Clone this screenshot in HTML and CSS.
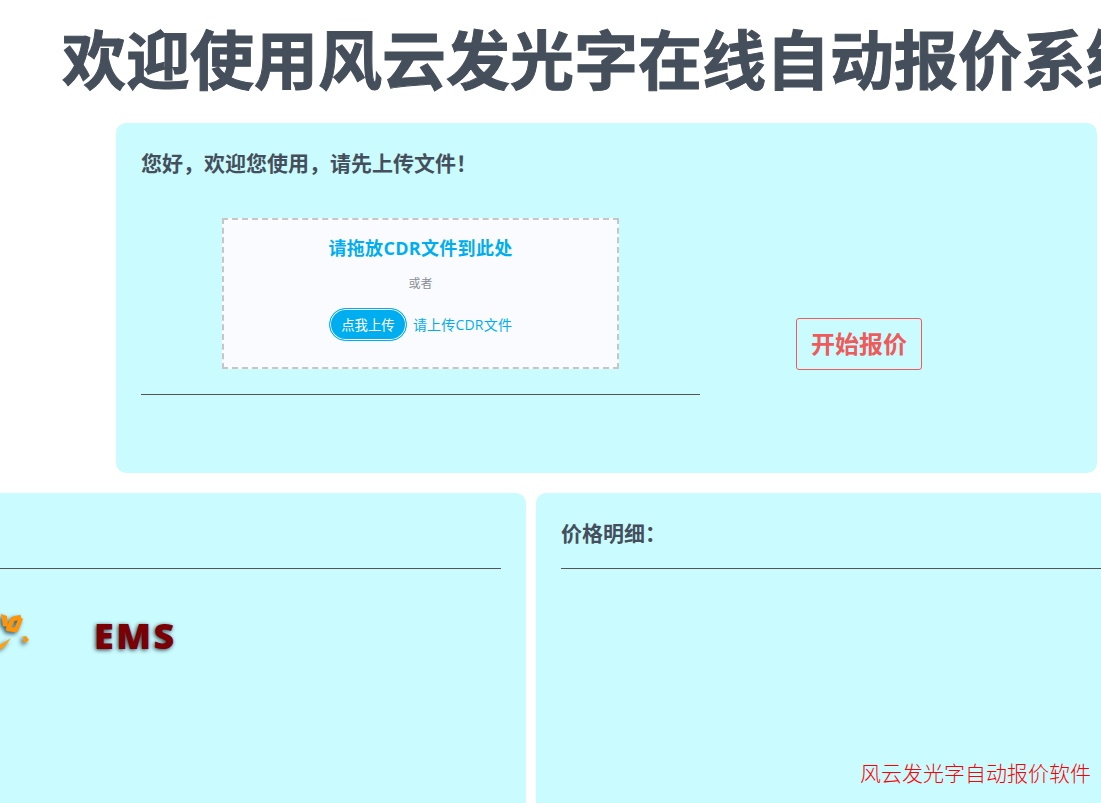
FILE: index.html
```html
<!DOCTYPE html>
<html lang="zh-CN">
<head>
  <meta charset="UTF-8">
  <meta name="viewport" content="width=device-width, initial-scale=1">
  <title>风云发光字在线自动报价系统</title>
  <link rel="stylesheet" href="styles.css">
</head>
<body>

  <h1 class="page-title">欢迎使用风云发光字在线自动报价系统</h1>

  <section class="card upload-card">
    <h2>您好，欢迎您使用，请先上传文件！</h2>
    <div class="upload-row">
      <div class="upload-col">
        <div class="drop-zone">
          <p class="drop-title">请拖放CDR文件到此处</p>
          <p class="drop-or">或者</p>
          <div class="drop-actions">
            <button class="upload-btn" type="button">点我上传</button>
            <span class="upload-hint">请上传CDR文件</span>
          </div>
        </div>
      </div>
      <button class="quote-btn" type="button">开始报价</button>
    </div>
  </section>

  <div class="bottom-row">
    <section class="card preview-card">
      <div class="card-head"></div>
      <div class="preview">
        <svg class="logo-mark" width="30" height="40" viewBox="0 0 30 40">
          <path d="M21 7 L13 9 L8 19 L16 20 L21 8" fill="none" stroke="#ff9408" stroke-width="4.5" stroke-linejoin="round"/>
          <path d="M1 4 L7 6 L8 17 L3 16 Z" fill="#ff9408"/>
          <path d="M0 35 L11 28 L6 35 L0 40 Z" fill="#ffa010"/>
          <path d="M22 27 L26 26 L29 30 L25 33 L22 31 L25 30 Z" fill="#ff9408"/>
        </svg>
        <span class="ems">EMS</span>
      </div>
    </section>
    <section class="card price-card">
      <h2 class="card-head">价格明细：</h2>
    </section>
  </div>

  <div class="brand-note">风云发光字自动报价软件</div>

</body>
</html>
```
FILE: styles.css
```css
/* ========== GLOBAL STYLES ========== */
* {
  box-sizing: border-box;
  margin: 0;
  padding: 0;
}

html, body {
  height: 803px;
  overflow: hidden;
}

body {
  position: relative;
  width: 1101px;
  font-family: "Open Sans", "Noto Sans CJK SC", sans-serif;
  background: #fff;
  color: #454f5b;
}

h2 {
  font-size: 21px;
  line-height: 26px;
  font-weight: 700;
}

.page-title {
  height: 123px;
  padding: 20px 0 0 62px;
  font-size: 64px;
  line-height: 80px;
  font-weight: 700;
  -webkit-text-stroke: 1px #454f5b;
  white-space: nowrap;
}

.card {
  background: #c9fbff;
  border-radius: 10px;
}

/* ========== UPLOAD CARD ========== */
.upload-card {
  width: 981px;
  height: 350px;
  margin-left: 116px;
  padding: 27px 25px;
}

.upload-row {
  display: flex;
  align-items: flex-end;
  margin-top: 42px;
}

.upload-col {
  width: 559px;
  padding: 0 0 25px 81px;
  border-bottom: 1px solid #555;
}

.drop-zone {
  width: 397px;
  height: 151px;
  padding-top: 16px;
  background: #f9fbff;
  border: 2px dashed #c6c6c6;
  text-align: center;
}

.drop-title {
  font-size: 18px;
  line-height: 25px;
  font-weight: 700;
  letter-spacing: 0.3px;
  color: #00aeef;
}

.drop-or {
  margin-top: 13px;
  font-size: 12px;
  line-height: 20px;
  color: #8a8f95;
}

.drop-actions {
  display: flex;
  align-items: center;
  justify-content: center;
  gap: 6px;
  margin-top: 14px;
}

.upload-btn {
  width: 78px;
  height: 33px;
  font: inherit;
  font-size: 13.33px;
  color: #fff;
  background: #00aeef;
  border: 1px solid #00aeef;
  border-radius: 17px;
  box-shadow: inset 0 0 0 1px #fff;
}

.upload-hint {
  padding-bottom: 2px;
  font-size: 14px;
  letter-spacing: 0.2px;
  color: #00aeef;
}

.quote-btn {
  width: 126px;
  height: 52px;
  margin: 0 0 25px 96px;
  padding-bottom: 3px;
  font: inherit;
  font-size: 24px;
  font-weight: 700;
  color: #ef5a5a;
  background: transparent;
  border: 1px solid #ef5a5a;
  border-radius: 3px;
}

/* ========== BOTTOM CARDS ========== */
.bottom-row {
  display: flex;
  gap: 10px;
  width: 1200px;
  height: 330px;
  margin: 20px 0 0 -60px;
}

.preview-card {
  flex: 0 0 586px;
  padding: 27px 25px;
}

.price-card {
  flex: 1;
  padding: 27px 25px;
}

.card-head {
  height: 49px;
  border-bottom: 1px solid #555;
}

.preview {
  display: flex;
  align-items: flex-start;
  padding: 41px 0 0 35px;
}

.logo-mark {
  flex: none;
  filter: drop-shadow(-2px 2px 2px #2f5560);
}

.ems {
  margin: 6px 0 0 64px;
  font-family: "Open Sans", sans-serif;
  font-size: 36px;
  line-height: 40px;
  font-weight: 800;
  letter-spacing: 2.5px;
  color: #7a0005;
  text-shadow: -1px 1px 4px #2a3a40;
}

/* sits over the corner of the price card */
.brand-note {
  position: absolute;
  right: 10px;
  top: 761px;
  font-family: "Liberation Serif", "Noto Sans CJK SC", serif;
  font-size: 21px;
  line-height: 26px;
  font-weight: 300;
  color: #f00;
}
```
